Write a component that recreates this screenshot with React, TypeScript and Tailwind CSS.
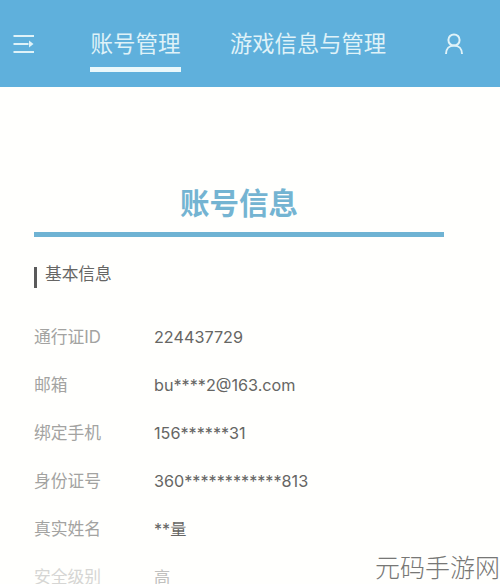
const font = { fontFamily: '"Noto Sans CJK SC", "Noto Sans", sans-serif' };

const rows = [
  { label: "通行证ID", value: "224437729" },
  { label: "邮箱", value: "bu****2@163.com" },
  { label: "绑定手机", value: "156******31" },
  { label: "身份证号", value: "360************813" },
  { label: "真实姓名", value: "**量" },
  { label: "安全级别", value: "高", faded: true },
];

function MenuIcon() {
  return (
    <svg width="22" height="20" viewBox="0 0 22 20" fill="none" stroke="#dff2f8" strokeWidth="2" aria-hidden>
      <path d="M0.5 2h20.5M0.5 10h15M0.5 18h20.5" />
      <path d="M16 6.5l4.5 3.500-4.500 3.500z" fill="#dff2f8" stroke="none" />
    </svg>
  );
}

function UserIcon() {
  return (
    <svg width="20" height="22" viewBox="0 0 20 22" fill="none" stroke="#dff2f8" strokeWidth="2" aria-hidden>
      <circle cx="10" cy="7" r="5.6" />
      <path d="M2 21c0-5 3-8.400 8-8.400s8 3.400 8 8.400" />
    </svg>
  );
}

function Row({ label, value, faded }: { label: string; value: string; faded?: boolean }) {
  return (
    <div className="flex h-12 items-center text-[16.8px] font-[Inter,'Noto_Sans_CJK_SC',sans-serif]">
      <span className={`w-[120px] shrink-0 ${faded ? "text-[#d6d6d4]" : "text-[#a3a3a1]"}`}>{label}</span>
      <span className={`-translate-y-px text-[16.2px] ${faded ? "text-[#c0c0be]" : "text-[#666664]"}`}>{value}</span>
    </div>
  );
}

export default function App() {
  return (
    <div className="relative h-[584px] w-[500px] overflow-hidden bg-[#fffffd]" style={font}>
      <header className="flex h-[87px] items-start bg-[#5fb0dc] text-[#dff2f8]">
        <div className="mt-[34px] ml-[13px] w-[77px] shrink-0">
          <MenuIcon />
        </div>
        <div className="flex w-[91px] shrink-0 flex-col items-center">
          <span className="mt-[23px] h-[38px] text-[22.5px] leading-[38px] whitespace-nowrap">账号管理</span>
          <span className="mt-[6px] h-[5px] w-full bg-[#eaf8fb]" />
        </div>
        <span className="mt-[23px] ml-[49px] text-[22.3px] leading-[38px] whitespace-nowrap">游戏信息与管理</span>
        <div className="mt-[33px] ml-[58px]">
          <UserIcon />
        </div>
      </header>

      <main className="px-[34px]">
        <h1 className="mt-[92px] w-[410px] text-center text-[29.5px] leading-[44px] font-bold text-[#74b4d2]">账号信息</h1>
        <div className="mt-[9px] h-[5px] w-[410px] bg-[#6fb3d3]" />
        <div className="mt-[30px] flex h-[21px] items-center">
          <span className="h-[21px] w-[3px] bg-[#5a5a5a]" />
          <span className="ml-2 -translate-y-[4px] text-[16.7px] text-[#666664]">基本信息</span>
        </div>
        <div className="mt-[26px]">
          {rows.map((r) => (
            <Row key={r.label} label={r.label} value={r.value} faded={r.faded} />
          ))}
        </div>
      </main>

      {/* watermark over the page */}
      <div className="absolute right-0 bottom-0 text-[25px] leading-[36px] font-light whitespace-nowrap text-[#777775]">
        元码手游网
      </div>
    </div>
  );
}
